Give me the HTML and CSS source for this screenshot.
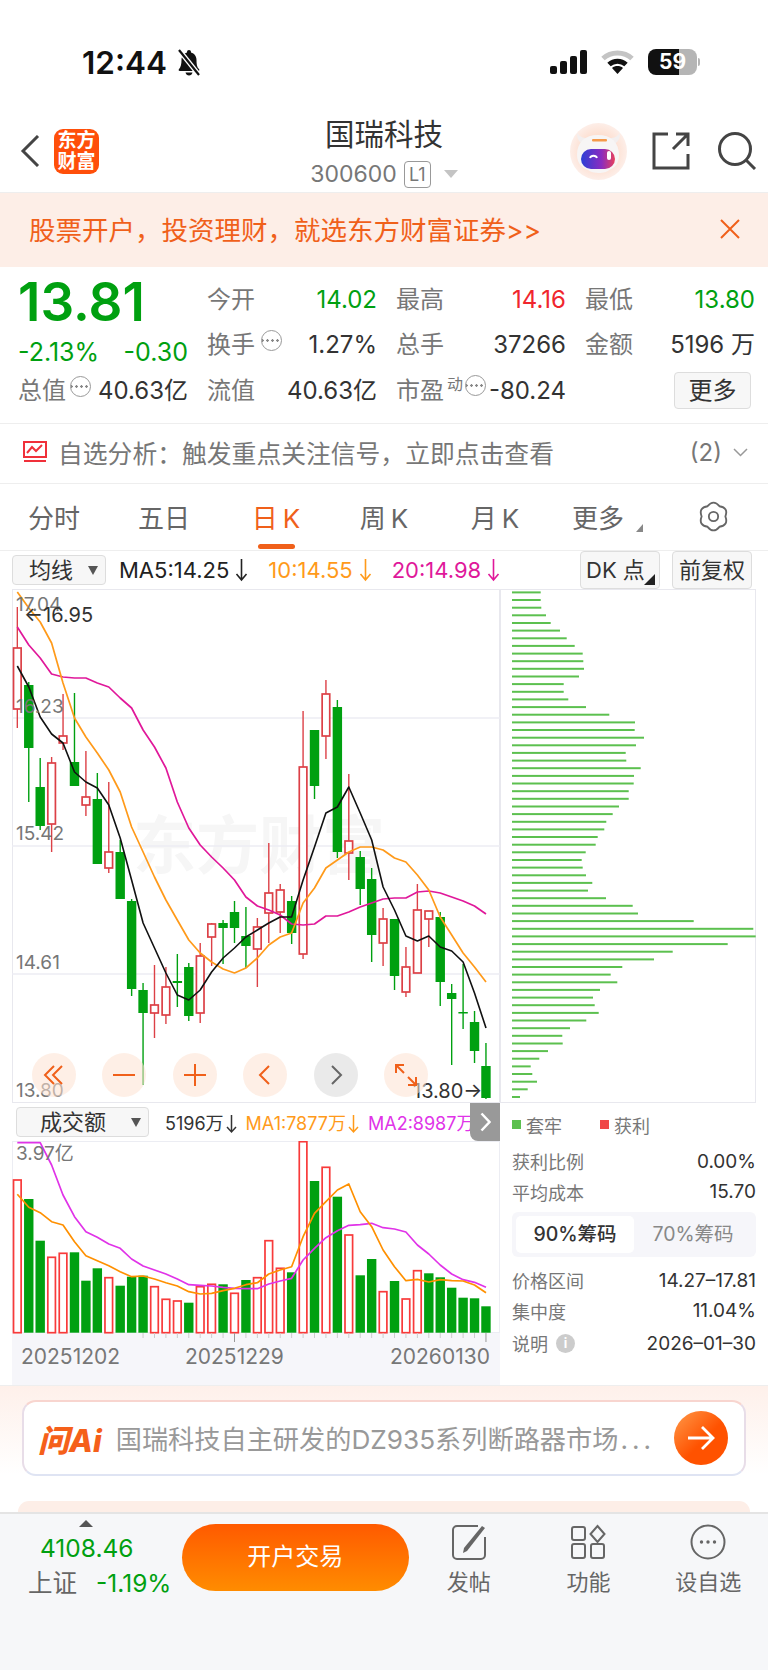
FILE: index.html
```html
<!DOCTYPE html>
<html>
<head>
    <meta charset="utf-8">
    <title>国瑞科技</title>
    <link rel="stylesheet" href="styles.css">
</head>
<body>
<div class="page">
    <div class="status">
        <div class="status-left">
            <span class="time">12:44</span>
            <svg class="bell" width="26" height="28" viewBox="0 0 26 28">
                <path d="M13 1c-1.200 0-2 .8-2 2v.6C7.600 4.500 5.500 7.500 5.500 11c0 4-.6 7-2.600 9.300-.6.8-.1 1.700.9 1.700h18.400c1 0 1.500-.9.9-1.700C20.700 18 20.500 15 20.500 11c0-3.500-2.100-6.500-5.500-7.400V3c0-1.200-.8-2-2-2z" fill="#111"/>
                <path d="M9.500 23.500h7c-.4 1.800-1.800 3-3.500 3s-3.100-1.200-3.500-3z" fill="#111"/>
                <path d="M3 1l20 25" stroke="#fff" stroke-width="5"/>
                <path d="M3 1l20 25" stroke="#111" stroke-width="2.200"/>
            </svg>
        </div>
        <div class="status-right">
            <svg width="37" height="24" viewBox="0 0 37 24">
                <rect x="0" y="16" width="7" height="8" rx="2" fill="#111"/>
                <rect x="10" y="11" width="7" height="13" rx="2" fill="#111"/>
                <rect x="20" y="6" width="7" height="18" rx="2" fill="#111"/>
                <rect x="30" y="0" width="7" height="24" rx="2" fill="#111"/>
            </svg>
            <svg width="33" height="24" viewBox="0 0 33 24">
                <path d="M2 8.500C10 1 23 1 31 8.500" fill="none" stroke="#c4c4c4" stroke-width="5"/>
                <path d="M8 14.500c5-4.500 12-4.500 17 0" fill="none" stroke="#111" stroke-width="5"/>
                <path d="M16.500 24l-5.500-6c3-2.600 8-2.600 11 0z" fill="#111"/>
            </svg>
            <div class="battery">
                <span class="battery-fill">59</span>
            </div>
        </div>
    </div>

    <div class="nav">
        <div class="nav-left">
            <svg width="20" height="32" viewBox="0 0 20 32"><path d="M18 1L3 16l15 15" fill="none" stroke="#444" stroke-width="3"/></svg>
            <div class="logo">东方<br>财富</div>
        </div>
        <div class="nav-title">
            <div class="stock-name">国瑞科技</div>
            <div class="stock-code">300600<span class="level">L1</span><span class="code-caret"></span></div>
        </div>
        <div class="nav-right">
            <svg width="57" height="57" viewBox="0 0 57 57">
                <defs>
                    <linearGradient id="visor" x1="0" y1="0" x2="1" y2="0">
                        <stop offset="0" stop-color="#2b3fd6"/>
                        <stop offset="0.6" stop-color="#8a2cc0"/>
                        <stop offset="1" stop-color="#e8405c"/>
                    </linearGradient>
                    <radialGradient id="halo">
                        <stop offset="0.6" stop-color="#fde0d2"/>
                        <stop offset="1" stop-color="#fdeee8"/>
                    </radialGradient>
                </defs>
                <circle cx="28.500" cy="28.500" r="28.500" fill="url(#halo)"/>
                <path d="M7 10c0 6 2 9 6 11l4-6c-4 0-7-1-10-5zM50 10c0 6-2 9-6 11l-4-6c4 0 7-1 10-5z" fill="#f3efef"/>
                <path d="M28 12c13 0 21 7 21 20 0 8-4 13-10 15-3 4-17 4-21 0-6-2-11-7-11-15 0-13 8-20 21-20z" fill="#f7f5f5"/>
                <rect x="22" y="16" width="15" height="2.500" rx="1" fill="#f59a4a"/>
                <rect x="11" y="26" width="34" height="20" rx="10" fill="url(#visor)"/>
                <path d="M20 35c1-3 6-3 7 0" fill="none" stroke="#fff" stroke-width="1.800"/>
                <rect x="37" y="28" width="4" height="9" rx="2" fill="#fff"/>
            </svg>
            <svg class="share" width="38" height="38" viewBox="0 0 38 38">
                <path d="M16 2H2v34h34V22M21 17L36 2M24 2h12v12" fill="none" stroke="#444" stroke-width="3"/>
            </svg>
            <svg class="search" width="39" height="38" viewBox="0 0 39 38">
                <circle cx="17" cy="17" r="15.500" fill="none" stroke="#444" stroke-width="3"/>
                <path d="M28 28l9 9" stroke="#444" stroke-width="3"/>
            </svg>
        </div>
    </div>

    <div class="banner">
        <span>股票开户，投资理财，就选东方财富证券&gt;&gt;</span>
        <svg width="20" height="20" viewBox="0 0 20 20"><path d="M1 1l18 18M19 1L1 19" stroke="#f0601a" stroke-width="2"/></svg>
    </div>

    <div class="quote">
        <div class="quote-main">
            <div class="price">13.81</div>
            <div class="change"><span>-2.13%</span><span>-0.30</span></div>
            <div class="stat-cell">
                <span class="label">总值<i class="dots"></i></span><span class="value">40.63亿</span>
            </div>
        </div>
        <div class="stats">
            <div class="stat-cell"><span class="label">今开</span><span class="value green">14.02</span></div>
            <div class="stat-cell"><span class="label">最高</span><span class="value red">14.16</span></div>
            <div class="stat-cell"><span class="label">最低</span><span class="value green">13.80</span></div>
            <div class="stat-cell"><span class="label">换手<i class="dots"></i></span><span class="value">1.27%</span></div>
            <div class="stat-cell"><span class="label">总手</span><span class="value">37266</span></div>
            <div class="stat-cell"><span class="label">金额</span><span class="value">5196 万</span></div>
            <div class="stat-cell"><span class="label">流值</span><span class="value">40.63亿</span></div>
            <div class="stat-cell"><span class="label">市盈<sup class="sup">动</sup><i class="dots"></i></span><span class="value">-80.24</span></div>
            <div class="stat-cell more-cell"><span class="more-btn">更多</span></div>
        </div>
    </div>

    <div class="alert">
        <svg width="24" height="22" viewBox="0 0 24 22">
            <rect x="1" y="1" width="22" height="15" fill="none" stroke="#f0303a" stroke-width="2"/>
            <path d="M4 12l5-6 4 4 6-6" fill="none" stroke="#f0303a" stroke-width="2"/>
            <path d="M1 20h22" stroke="#f0303a" stroke-width="2"/>
        </svg>
        <span class="alert-text">自选分析：触发重点关注信号，立即点击查看</span>
        <span class="alert-count">(2)</span>
        <svg width="15" height="9" viewBox="0 0 15 9"><path d="M1 1l6.500 6.500L14 1" fill="none" stroke="#999" stroke-width="1.500"/></svg>
    </div>

    <div class="tabs">
        <div class="tab">分时</div>
        <div class="tab">五日</div>
        <div class="tab active">日<span class="tab-k">K</span></div>
        <div class="tab">周<span class="tab-k">K</span></div>
        <div class="tab">月<span class="tab-k">K</span></div>
        <div class="tab tab-more">更多</div>
        <svg class="gear" width="31" height="31" viewBox="0 0 30 30">
            <path d="M9.250 5.040Q15-2 20.750 5.040 29.720 6.500 26.500 15 29.720 23.500 20.750 24.960 15 32 9.250 24.960 .28 23.500 3.500 15 .28 6.500 9.250 5.040z" fill="none" stroke="#666" stroke-width="1.800" stroke-linejoin="round"/>
            <circle cx="15" cy="15" r="4.500" fill="none" stroke="#666" stroke-width="1.800"/>
        </svg>
    </div>

    <div class="toolbar">
        <div class="select select-ma">均线</div>
        <span class="ma ma5">MA5:14.25<svg class="arrow" width="13" height="24" viewBox="0 0 13 24"><path d="M6.500 1v21M1.500 16l5 6 5-6" fill="none" stroke="currentColor" stroke-width="1.600"/></svg></span>
        <span class="ma ma10">10:14.55<svg class="arrow" width="13" height="24" viewBox="0 0 13 24"><path d="M6.500 1v21M1.500 16l5 6 5-6" fill="none" stroke="currentColor" stroke-width="1.600"/></svg></span>
        <span class="ma ma20">20:14.98<svg class="arrow" width="13" height="24" viewBox="0 0 13 24"><path d="M6.500 1v21M1.500 16l5 6 5-6" fill="none" stroke="currentColor" stroke-width="1.600"/></svg></span>
        <div class="tool-buttons">
            <div class="tool-btn corner">DK 点</div>
            <div class="tool-btn">前复权</div>
        </div>
    </div>

    <div class="charts">
        <div class="charts-left">
            <div class="kline">
                <div id="kline"></div>
                <div class="zoom-btns">
                    <div class="zoom-btn"><svg width="24" height="24" viewBox="0 0 24 24"><path d="M12 3l-9 9 9 9M20 3l-9 9 9 9" fill="none" stroke="#f0601a" stroke-width="2"/></svg></div>
                    <div class="zoom-btn"><svg width="24" height="24" viewBox="0 0 24 24"><path d="M1 12h22" stroke="#f0601a" stroke-width="2"/></svg></div>
                    <div class="zoom-btn"><svg width="24" height="24" viewBox="0 0 24 24"><path d="M1 12h22M12 1v22" stroke="#f0601a" stroke-width="2"/></svg></div>
                    <div class="zoom-btn"><svg width="24" height="24" viewBox="0 0 24 24"><path d="M16 3l-9 9 9 9" fill="none" stroke="#f0601a" stroke-width="2"/></svg></div>
                    <div class="zoom-btn zoom-off"><svg width="24" height="24" viewBox="0 0 24 24"><path d="M8 3l9 9-9 9" fill="none" stroke="#666" stroke-width="2"/></svg></div>
                    <div class="zoom-btn"><svg width="26" height="26" viewBox="0 0 26 26"><path d="M3 11V3h8M3 3l8 8M23 15v8h-8M23 23l-8-8" fill="none" stroke="#f0601a" stroke-width="2"/></svg></div>
                </div>
            </div>
            <div class="vol-bar">
                <div class="select select-vol">成交额</div>
                <span class="vol-ma vol-now">5196万<svg class="arrow" width="11" height="20" viewBox="0 0 11 20"><path d="M5.500 1v17M1 13l4.500 5 4.500-5" fill="none" stroke="currentColor" stroke-width="1.500"/></svg></span>
                <span class="vol-ma vol-ma1">MA1:7877万<svg class="arrow" width="11" height="20" viewBox="0 0 11 20"><path d="M5.500 1v17M1 13l4.500 5 4.500-5" fill="none" stroke="currentColor" stroke-width="1.500"/></svg></span>
                <span class="vol-ma vol-ma2">MA2:8987万<svg class="arrow" width="11" height="20" viewBox="0 0 11 20"><path d="M5.500 1v17M1 13l4.500 5 4.500-5" fill="none" stroke="currentColor" stroke-width="1.500"/></svg></span>
                <div class="vol-toggle"><svg width="11" height="20" viewBox="0 0 11 20"><path d="M1.500 1.500L9.500 10l-8 8.500" fill="none" stroke="#fff" stroke-width="2.500"/></svg></div>
            </div>
            <div id="volume"></div>
        </div>
        <div class="charts-right">
            <div id="depth"></div>
            <div class="side">
                <div class="legend">
                    <span class="legend-item"><i class="swatch swatch-green"></i>套牢</span>
                    <span class="legend-item"><i class="swatch swatch-red"></i>获利</span>
                </div>
                <div class="side-row"><span class="label">获利比例</span><span class="side-value">0.00%</span></div>
                <div class="side-row"><span class="label">平均成本</span><span class="side-value">15.70</span></div>
                <div class="chip-tabs">
                    <span class="chip-tab on">90%筹码</span>
                    <span class="chip-tab">70%筹码</span>
                </div>
                <div class="side-row"><span class="label">价格区间</span><span class="side-value">14.27–17.81</span></div>
                <div class="side-row"><span class="label">集中度</span><span class="side-value">11.04%</span></div>
                <div class="side-row side-last"><span class="label">说明<i class="info">i</i></span><span class="side-value">2026–01–30</span></div>
            </div>
        </div>
    </div>

    <div class="ask">
        <div class="ask-box">
            <span class="ask-logo">问Ai</span>
            <span class="ask-text">国瑞科技自主研发的DZ935系列断路器市场<span class="ask-more">...</span></span>
            <div class="ask-go">
                <svg width="28" height="28" viewBox="0 0 28 28"><path d="M1 14h25M15 3l11 11-11 11" fill="none" stroke="#fff" stroke-width="2.800"/></svg>
            </div>
        </div>
        <div class="peek"></div>
    </div>

    <div class="footer">
        <div class="index">
            <div class="index-caret"></div>
            <div class="index-value">4108.46</div>
            <div class="index-row"><span>上证</span><span class="green">-1.19%</span></div>
        </div>
        <div class="trade-btn">开户交易</div>
        <div class="action">
            <svg width="36" height="36" viewBox="0 0 36 36">
                <path d="M27 2H6a4 4 0 0 0-4 4v25a4 4 0 0 0 4 4h24a4 4 0 0 0 4-4V13" fill="none" stroke="#666" stroke-width="2"/>
                <path d="M13 24L31 2l3 2-18 23-4 2z" fill="#666"/>
            </svg>
            <span>发帖</span>
        </div>
        <div class="action">
            <svg width="36" height="36" viewBox="0 0 36 36">
                <rect x="2" y="3" width="13" height="13" rx="2" fill="none" stroke="#666" stroke-width="2"/>
                <rect x="2" y="20" width="13" height="14" rx="2" fill="none" stroke="#666" stroke-width="2"/>
                <rect x="21" y="20" width="13" height="14" rx="2" fill="none" stroke="#666" stroke-width="2"/>
                <path d="M27.500 2l7 8-7 8-7-8z" fill="none" stroke="#666" stroke-width="2"/>
            </svg>
            <span>功能</span>
        </div>
        <div class="action">
            <svg width="36" height="36" viewBox="0 0 36 36">
                <circle cx="18" cy="18" r="16.500" fill="none" stroke="#666" stroke-width="2"/>
                <circle cx="11.500" cy="18" r="1.700" fill="#666"/>
                <circle cx="18" cy="18" r="1.700" fill="#666"/>
                <circle cx="24.500" cy="18" r="1.700" fill="#666"/>
            </svg>
            <span>设自选</span>
        </div>
    </div>
</div>
<script src="chart.js"></script>
</body>
</html>
```

FILE: styles.css
```css
* {
    box-sizing: border-box;
}

body {
    margin: 0;
    background-color: white;
    color: #333;
    font-family: Inter, "Noto Sans CJK SC", sans-serif;
}

.page {
    width: 768px;
    height: 1670px;
    overflow: hidden;
}

.green {
    color: #00a010;
}

.red {
    color: #f0262d;
}

.label {
    color: #777;
    display: flex;
    align-items: center;
}

.arrow {
    vertical-align: -4px;
    margin-left: 6px;
}

/* status bar */
.status {
    height: 110px;
    padding: 49px 71px 0 82px;
    display: flex;
    justify-content: space-between;
    align-items: flex-start;
}

.status-left,
.status-right {
    display: flex;
    align-items: center;
}

.status-right svg {
    margin-right: 14px;
}

.time {
    font-size: 31.500px;
    font-weight: 600;
    line-height: 26px;
    color: #111;
}

.bell {
    margin-left: 9px;
}

.battery {
    position: relative;
    width: 49px;
    height: 26px;
    border-radius: 8px;
    background: linear-gradient(to right, #111 64%, #b5b5b5 64%);
}

.battery::after {
    content: "";
    position: absolute;
    right: -3px;
    top: 9px;
    width: 2px;
    height: 8px;
    border-radius: 0 2px 2px 0;
    background-color: #b5b5b5;
}

.battery-fill {
    display: block;
    text-align: center;
    color: white;
    font-size: 21px;
    font-weight: 700;
    line-height: 26px;
}

/* nav */
.nav {
    height: 83px;
    border-bottom: 1px solid #eee;
    display: grid;
    grid-template-columns: 1fr auto 1fr;
    align-items: center;
}

.nav-left {
    display: flex;
    align-items: center;
    padding-left: 20px;
    gap: 14px;
}

.logo {
    width: 45px;
    height: 45px;
    border-radius: 9px;
    background-color: #ff4f0a;
    color: white;
    font-size: 19px;
    font-weight: bold;
    line-height: 21px;
    text-align: center;
    padding-top: 1px;
}

.nav-title {
    text-align: center;
    padding-bottom: 4px;
}

.stock-name {
    font-size: 29.500px;
    line-height: 36px;
    color: #333;
    margin-top: 5px;
}

.stock-code {
    display: flex;
    align-items: center;
    justify-content: center;
    font-size: 23px;
    line-height: 27px;
    color: #777;
    margin-top: 9px;
}

.level {
    width: 27px;
    height: 27px;
    margin-left: 7px;
    border: 1px solid #999;
    border-radius: 4px;
    font-size: 18px;
    line-height: 25px;
    text-align: center;
}

.code-caret {
    margin-left: 13px;
    border-left: 7px solid transparent;
    border-right: 7px solid transparent;
    border-top: 8px solid #c4c4c4;
}

.nav-right {
    display: flex;
    align-items: center;
    justify-content: flex-end;
    padding-right: 11px;
}

.share {
    margin-left: 25px;
}

.search {
    margin-left: 28px;
}

/* banner */
.banner {
    height: 74px;
    background-color: #fdeee7;
    color: #f0601a;
    font-size: 26.500px;
    display: flex;
    align-items: center;
    justify-content: space-between;
    padding: 0 28px 3px 29px;
}

/* quote */
.quote {
    height: 157px;
    padding: 0 13px 0 18px;
    border-bottom: 1px solid #eee;
    display: flex;
    font-size: 24px;
}

.quote-main {
    width: 170px;
    margin-right: 19px;
}

.price {
    margin-top: 5px;
    height: 60px;
    font-size: 53px;
    line-height: 60px;
    font-weight: 600;
    color: #00a010;
}

.change {
    height: 40px;
    line-height: 40px;
    font-size: 25px;
    color: #00a010;
    display: flex;
    justify-content: space-between;
}

.quote-main .stat-cell {
    height: 38px;
}

.stats {
    flex: 1;
    margin-top: 10px;
    display: grid;
    grid-template-columns: repeat(3, 170px);
    grid-auto-rows: 45.500px;
    column-gap: 19px;
}

.stat-cell {
    display: flex;
    justify-content: space-between;
    align-items: center;
    line-height: 38px;
    white-space: nowrap;
}

.value {
    color: #333;
}

.value.green {
    color: #00a010;
}

.value.red {
    color: #f0262d;
}

.dots {
    width: 21px;
    height: 21px;
    margin-left: 6px;
    margin-bottom: 10px;
    border: 1px solid #999;
    border-radius: 50%;
    background: radial-gradient(circle, #888 1px, transparent 1.500px) 0 0 / 5px 5px repeat-x;
    background-position: 3px 7px;
}

.quote-main .dots {
    margin-left: 4px;
}

.sup {
    font-size: 16px;
    line-height: 16px;
    margin: 0 0 14px 3px;
}

.sup + .dots {
    margin-left: 2px;
}

.more-cell {
    justify-content: flex-end;
}

.more-btn {
    width: 77px;
    height: 37px;
    margin-right: 4px;
    background-color: #f7f7f7;
    border: 1px solid #ddd;
    border-radius: 4px;
    text-align: center;
    line-height: 35px;
}

/* alert row */
.alert {
    height: 60px;
    border-bottom: 1px solid #eee;
    padding: 0 20px 3px 23px;
    display: flex;
    align-items: center;
    color: #777;
    font-size: 24.800px;
}

.alert-text {
    margin-left: 11px;
    flex: 1;
}

.alert-count {
    margin-right: 11px;
    font-size: 24px;
}

/* period tabs */
.tabs {
    height: 67px;
    border-bottom: 1px solid #eee;
    padding-bottom: 2px;
    display: grid;
    grid-template-columns: 108px 112px 112px 104px 118px 88px 126px;
    align-items: center;
    font-size: 26px;
    color: #666;
}

.tab {
    text-align: center;
    position: relative;
}

.tab-k {
    margin-left: 5px;
}

.tab.active {
    color: #f0601a;
}

.tab.active::after {
    content: "";
    position: absolute;
    left: 38px;
    bottom: -14px;
    width: 37px;
    height: 5px;
    border-radius: 3px;
    background-color: #f0601a;
}

.tab-more::after {
    content: "";
    position: absolute;
    right: -1px;
    bottom: 3px;
    border-left: 7px solid transparent;
    border-bottom: 8px solid #888;
}

.gear {
    margin-left: 56px;
}

/* MA toolbar */
.toolbar {
    height: 38px;
    padding: 0 16px 0 12px;
    display: flex;
    align-items: center;
    font-size: 22px;
    white-space: nowrap;
}

.select {
    position: relative;
    background-color: #f7f7f7;
    border: 1px solid #ddd;
    border-radius: 4px;
    height: 30px;
    line-height: 28px;
}

.select::after {
    content: "";
    position: absolute;
    right: 7px;
    top: 10px;
    border-left: 5px solid transparent;
    border-right: 5px solid transparent;
    border-top: 9px solid #555;
}

.select-ma {
    width: 94px;
    padding-left: 16px;
    font-size: 22px;
    margin-right: 13px;
}

.ma5 {
    color: #222;
    margin-right: 20px;
}

.ma10 {
    color: #ff9a1a;
    margin-right: 20px;
}

.ma20 {
    color: #e0189a;
}

.tool-buttons {
    margin-left: auto;
    display: flex;
    gap: 12px;
}

.tool-btn {
    position: relative;
    width: 80px;
    height: 38px;
    background-color: #f7f7f7;
    border: 1px solid #ddd;
    border-radius: 4px;
    text-align: center;
    font-size: 22px;
    line-height: 36px;
    white-space: nowrap;
}

.corner {
    text-align: left;
    padding-left: 5px;
}

.corner::after {
    content: "";
    position: absolute;
    right: 4px;
    bottom: 3px;
    border-left: 11px solid transparent;
    border-bottom: 11px solid #222;
}

/* charts */
.charts {
    height: 796px;
    display: flex;
}

.charts-left {
    width: 488px;
    margin-left: 12px;
}

.charts-right {
    width: 268px;
}

.charts svg {
    display: block;
}

.kline {
    position: relative;
    height: 514px;
}

.zoom-btns {
    position: absolute;
    left: 20px;
    top: 464px;
    display: flex;
    gap: 26.400px;
}

.zoom-btn {
    width: 44px;
    height: 44px;
    border-radius: 50%;
    background-color: rgba(253, 226, 210, 0.55);
    display: flex;
    align-items: center;
    justify-content: center;
}

.zoom-off {
    background-color: rgba(220, 220, 220, 0.6);
}

.axis-label {
    font-size: 19px;
    fill: #777;
}

.mark-label {
    font-size: 20px;
    fill: #333;
}

.date-label {
    font-size: 21px;
    fill: #777;
}

.watermark {
    font-size: 63px;
    font-weight: bold;
    fill: #f6f6f6;
}

.vol-bar {
    position: relative;
    height: 38px;
    padding-left: 4px;
    display: flex;
    align-items: center;
    font-size: 18px;
    white-space: nowrap;
}

.select-vol {
    width: 133px;
    font-size: 22px;
    padding-left: 23px;
    margin-right: 16px;
}

.vol-ma {
    margin-right: 9px;
}

.vol-ma .arrow {
    display: inline-block;
    margin-left: 2px;
}

.vol-now {
    color: #333;
}

.vol-ma1 {
    color: #ff9a1a;
}

.vol-ma2 {
    color: #e033e8;
}

.vol-toggle {
    position: absolute;
    right: 0;
    top: 0;
    width: 30px;
    height: 38px;
    border-bottom-left-radius: 8px;
    background-color: #999;
    display: flex;
    align-items: center;
    justify-content: center;
}

/* side panel */
.side {
    padding: 0 12px;
    font-size: 18px;
}

.legend {
    height: 43px;
    display: flex;
    align-items: center;
    gap: 38px;
    color: #777;
}

.legend-item {
    display: flex;
    align-items: center;
    gap: 5px;
}

.swatch {
    width: 9px;
    height: 9px;
}

.swatch-green {
    background-color: #5cc04f;
}

.swatch-red {
    background-color: #f04848;
}

.side-row {
    height: 30.500px;
    display: flex;
    justify-content: space-between;
    align-items: center;
}

.side-value {
    color: #333;
    font-size: 19px;
}

.chip-tabs {
    height: 45px;
    margin: 5px 0 8px;
    padding: 4px;
    border-radius: 6px;
    background-color: #f6f6fa;
    display: flex;
    font-size: 19.500px;
    color: #888;
}

.chip-tab {
    flex: 1;
    text-align: center;
    line-height: 37px;
    white-space: nowrap;
}

.chip-tab.on {
    flex: none;
    width: 118px;
    background-color: white;
    border-radius: 5px;
    color: #333;
    font-weight: 500;
}

.side-last {
    margin-top: 2px;
}

.info {
    width: 19px;
    height: 19px;
    margin-left: 8px;
    border-radius: 50%;
    background-color: #ccc;
    color: white;
    font-size: 13px;
    font-style: normal;
    font-weight: bold;
    line-height: 19px;
    text-align: center;
}

/* ask box */
.ask {
    height: 127px;
    border-top: 1px solid #eee;
    padding: 14px 22px 0;
    background: linear-gradient(#fef0ea, white 70%);
}

.ask-box {
    height: 76px;
    padding: 0 16px 0 14px;
    border: 2px solid #f8d5cf;
    border-bottom-color: #dfe4f3;
    border-right-color: #e8dde8;
    border-left-color: #e8dde8;
    border-radius: 14px;
    background-color: white;
    display: flex;
    align-items: center;
}

.ask-logo {
    font-size: 31px;
    font-weight: 800;
    font-style: italic;
    color: #f5601a;
    margin-right: 14px;
    white-space: nowrap;
}

.ask-text {
    flex: 1;
    font-size: 26.200px;
    color: #999;
    white-space: nowrap;
}

.ask-more {
    letter-spacing: 4px;
    margin-left: 2px;
}

.ask-go {
    width: 54px;
    height: 54px;
    border-radius: 50%;
    background: linear-gradient(135deg, #ff9a4a, #ff5200 55%);
    display: flex;
    align-items: center;
    justify-content: center;
}

.peek {
    height: 11px;
    margin: 25px -4px 0;
    border-radius: 14px 14px 0 0;
    background-color: #fdeee7;
}

/* footer */
.footer {
    height: 158px;
    border-top: 2px solid #e4e4e4;
    background-color: #f6f7f9;
    display: flex;
    align-items: flex-start;
}

.index {
    width: 182px;
    padding-left: 28px;
    font-size: 24.500px;
}

.index-caret {
    width: 0;
    margin: 6px 0 0 51px;
    border-left: 7px solid transparent;
    border-right: 7px solid transparent;
    border-bottom: 7px solid #555;
}

.index-value {
    color: #00a010;
    line-height: 30px;
    margin: 6px 0 0 12px;
}

.index-row {
    margin-top: 3px;
    line-height: 34px;
    color: #666;
    display: flex;
    gap: 19px;
    white-space: nowrap;
}

.trade-btn {
    width: 228px;
    height: 67px;
    margin-top: 10px;
    border-radius: 34px;
    background: linear-gradient(#ff5a00, #ff8c00);
    color: white;
    font-size: 24px;
    line-height: 66px;
    text-align: center;
}

.action {
    width: 120px;
    padding-top: 10px;
    display: flex;
    flex-direction: column;
    align-items: center;
    font-size: 22px;
    color: #666;
}

.action span {
    line-height: 30px;
    margin-top: 7px;
}
```

FILE: chart.js
```js
// all chart coordinates are page pixels, the viewBox of each svg keeps them that way
function candleX(i) {
    return 17.33 + 11.43 * i;
}

function line(values, color, width) {
    var points = values.map(function (y, i) {
        return candleX(i).toFixed(1) + "," + y;
    });
    return '<polyline points="' + points.join(" ") + '" fill="none" stroke="' + color +
        '" stroke-width="' + width + '" stroke-linejoin="round"/>';
}

function svg(x, y, w, h, body) {
    return '<svg width="' + w + '" height="' + h + '" viewBox="' + x + " " + y + " " + w + " " + h + '">' + body + "</svg>";
}

// g/r, high, low, body top, body bottom
var candles = [
    ["r", 607, 728, 648, 709], ["g", 682, 802, 685, 748], ["g", 758, 830, 787, 826], ["r", 757, 852, 763, 824],
    ["r", 694, 750, 736, 743], ["g", 693, 786, 762, 786], ["r", 751, 816, 797, 805], ["g", 773, 864, 799, 864],
    ["r", 782, 873, 852, 868], ["g", 840, 899, 852, 899], ["g", 899, 996, 901, 989], ["g", 983, 1085, 990, 1013],
    ["r", 965, 1038, 1005, 1013], ["r", 967, 1024, 987, 1015], ["g", 954, 1007, 981, 983], ["g", 963, 1021, 967, 1016],
    ["r", 943, 1023, 956, 1013], ["r", 923, 966, 924, 937], ["g", 920, 964, 923, 928], ["g", 901, 943, 912, 928],
    ["g", 907, 968, 936, 946], ["r", 918, 987, 927, 949], ["r", 843, 943, 893, 913], ["r", 884, 933, 890, 912],
    ["g", 896, 944, 901, 933], ["r", 711, 959, 767, 954], ["g", 730, 799, 730, 786], ["r", 680, 759, 694, 736],
    ["g", 700, 858, 707, 852], ["r", 774, 880, 841, 853], ["g", 851, 905, 857, 889], ["g", 868, 962, 879, 935],
    ["r", 908, 966, 919, 943], ["g", 919, 990, 919, 976], ["r", 947, 997, 967, 992], ["r", 884, 973, 910, 973],
    ["r", 911, 947, 911, 919], ["g", 912, 1006, 917, 982], ["g", 984, 1065, 993, 999], ["g", 964, 1029, 1012, 1013],
    ["g", 1011, 1063, 1022, 1051], ["g", 1043, 1099, 1066, 1098]
];

var ma5 = [666, 687, 717, 734, 743, 772, 782, 788, 805, 838, 880, 923, 948, 973, 995, 1000, 990, 972, 958, 948, 937,
    930, 923, 917, 917, 880, 847, 813, 807, 787, 813, 840, 887, 910, 936, 941, 936, 947, 951, 962, 993, 1028];
var ma10 = [592, 608, 622, 643, 683, 718, 737, 753, 770, 792, 827, 852, 877, 900, 920, 940, 953, 962, 969, 973, 968,
    958, 945, 937, 933, 903, 888, 868, 860, 852, 847, 847, 850, 858, 862, 875, 890, 917, 935, 953, 967, 982];
var ma20 = [627, 645, 658, 674, 677, 678, 678, 683, 687, 698, 708, 730, 747, 768, 802, 828, 845, 857, 868, 880, 897,
    906, 910, 915, 924, 925, 924, 916, 916, 912, 907, 903, 899, 898, 898, 892, 891, 893, 897, 901, 906, 914];

var volumes = [["r", 210], ["g", 267], ["g", 392], ["r", 442], ["r", 430], ["g", 427], ["g", 512], ["g", 475], ["r", 503],
    ["g", 527], ["g", 500], ["g", 497], ["r", 530], ["r", 568], ["r", 573], ["g", 578], ["r", 530], ["r", 523], ["g", 523],
    ["r", 550], ["g", 510], ["r", 503], ["r", 392], ["r", 475], ["g", 487], ["r", 95], ["g", 213], ["r", 172], ["g", 260],
    ["r", 375], ["g", 496], ["g", 447], ["r", 545], ["g", 513], ["r", 567], ["r", 482], ["g", 490], ["g", 502], ["g", 533],
    ["g", 563], ["g", 565], ["g", 589]];
var volMa1 = [253, 292, 308, 335, 345, 395, 437, 452, 467, 485, 500, 498, 507, 518, 528, 545, 552, 550, 542, 535, 524,
    518, 492, 480, 470, 380, 310, 275, 240, 222, 305, 350, 420, 470, 512, 508, 516, 509, 512, 513, 525, 548];
var volMa2 = [98, 98, 98, 165, 255, 320, 365, 382, 402, 415, 447, 468, 480, 492, 507, 524, 526, 528, 532, 535, 536,
    536, 522, 513, 505, 450, 415, 383, 362, 346, 344, 340, 353, 357, 366, 405, 432, 465, 492, 509, 517, 532];

var depthEnds = [152, 152, 154, 168, 182, 210, 230, 254, 278, 280, 282, 267, 221, 221, 235, 288, 358, 435, 434, 462, 438,
    407, 409, 452, 432, 431, 416, 416, 387, 368, 349, 343, 323, 317, 287, 275, 278, 288, 307, 294, 348, 428, 444, 611,
    790, 797, 713, 548, 492, 397, 362, 382, 330, 309, 314, 326, 289, 240, 217, 218, 174, 148, 122, 127, 141, 113, 90];

function drawKline() {
    var out = '<rect x="12.500" y="589.500" width="487" height="513" fill="none" stroke="#e8e8ee"/>';
    out += '<text class="watermark" x="133" y="868">东方财富</text>';
    [718, 846, 974].forEach(function (y) {
        out += '<path d="M12 ' + y + 'H500" stroke="#ecedf3" stroke-width="1.500"/>';
    });
    candles.forEach(function (c, i) {
        var x = candleX(i);
        var color = c[0] === "r" ? "#dc4046" : "#00a010";
        out += '<path d="M' + x + " " + c[1] + "V" + c[2] + '" stroke="' + color + '" stroke-width="1.400"/>';
        if (c[0] === "r") {
            out += '<rect x="' + (x - 3.8) + '" y="' + c[3] + '" width="7.600" height="' + (c[4] - c[3]) +
                '" fill="white" stroke="' + color + '" stroke-width="1.700"/>';
        } else {
            out += '<rect x="' + (x - 4.7) + '" y="' + c[3] + '" width="9.400" height="' + Math.max(c[4] - c[3], 1.5) +
                '" fill="' + color + '"/>';
        }
    });
    out += line(ma20, "#e0189a", 1.7) + line(ma10, "#ff9a1a", 1.7) + line(ma5, "#111", 1.6);
    // the price scale sits on top of the candles
    [[17.04, 611], [16.23, 713], [15.42, 840], [14.61, 969], [13.80, 1097]].forEach(function (t) {
        out += '<text class="axis-label" x="16" y="' + t[1] + '">' + t[0].toFixed(2) + "</text>";
    });
    out += '<text class="mark-label" x="24" y="622">←16.95</text>';
    out += '<text class="mark-label" x="413" y="1098">13.80→</text>';
    document.getElementById("kline").innerHTML = svg(12, 589, 488, 514, out);
}

function drawVolume() {
    var base = 1332.7;
    var out = '<rect x="12" y="1333" width="488" height="52" fill="#f6f6fa"/>';
    out += '<rect x="12.500" y="1141.500" width="487" height="191" fill="none" stroke="#ecedf3"/>';
    volumes.forEach(function (v, i) {
        var x = candleX(i);
        var top = 1110 + v[1] / 3;
        if (v[0] === "r") {
            out += '<rect x="' + (x - 3.8) + '" y="' + top.toFixed(1) + '" width="7.600" height="' + (base - top).toFixed(1) +
                '" fill="white" stroke="#f83a3a" stroke-width="1.700"/>';
        } else {
            out += '<rect x="' + (x - 4.7) + '" y="' + top.toFixed(1) + '" width="9.400" height="' + (base - top).toFixed(1) +
                '" fill="#00a010"/>';
        }
        if (i >= 11) {
            var long = i === 19 || i === 41;
            out += '<path d="M' + x + " 1333V" + (long ? 1342 : 1338) + '" stroke="' + (long ? "#999" : "#ccc") + '" stroke-width="1"/>';
        }
    });
    var toPage = function (v) {
        return (1110 + v / 3).toFixed(1);
    };
    out += line(volMa2.map(toPage), "#e033e8", 1.7) + line(volMa1.map(toPage), "#ff9000", 1.7);
    out += '<text class="axis-label" x="16" y="1160">3.97亿</text>';
    out += '<text class="date-label" x="21" y="1364">20251202</text>';
    out += '<text class="date-label" x="185" y="1364">20251229</text>';
    out += '<text class="date-label" x="390" y="1364">20260130</text>';
    document.getElementById("volume").innerHTML = svg(12, 1141, 488, 244, out);
}

function drawDepth() {
    var out = '<rect x="500.500" y="589.500" width="255" height="513" fill="none" stroke="#e8e8ee"/>';
    depthEnds.forEach(function (end, i) {
        var y = 592.4 + i * 7.645;
        out += '<rect x="512" y="' + (y - 1).toFixed(1) + '" width="' + ((end - 66) / 3).toFixed(1) + '" height="2" fill="#5cc04f"/>';
    });
    document.getElementById("depth").innerHTML = svg(500, 589, 268, 514, out);
}

drawKline();
drawVolume();
drawDepth();
```
